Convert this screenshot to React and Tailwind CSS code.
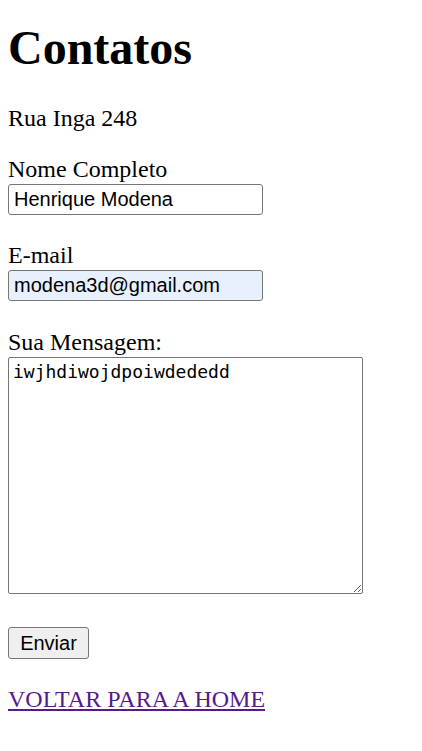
export default function App() {
  return (
    <div className="min-h-screen bg-white p-2 text-black font-['Liberation_Serif',serif] text-[24px]">
      <h1 className="mt-[12px] text-[48px] font-bold leading-[55px]">Contatos</h1>
      <p className="mt-[30px] leading-[27px]">Rua Inga 248</p>

      <form className="flex flex-col items-start" onSubmit={(e) => e.preventDefault()}>
        <label className="mt-[22px] block leading-[30px]">Nome Completo</label>
        <input
          className="h-[31px] w-[255px] rounded-[3px] border border-[#767676] bg-white px-[5px] font-['Liberation_Sans',sans-serif] text-[20px] text-black outline-none"
          defaultValue="Henrique Modena"
        />

        <label className="mt-[25px] block leading-[30px]">E-mail</label>
        <input
          className="h-[31px] w-[255px] rounded-[3px] border border-[#767676] bg-[#e8f0fe] px-[5px] font-['Liberation_Sans',sans-serif] text-[20px] text-black outline-none"
          defaultValue="modena3d@gmail.com"
        />

        <label className="mt-[26px] block leading-[30px]">Sua Mensagem:</label>
        <textarea
          className="h-[237px] w-[355px] rounded-[2px] border border-[#767676] bg-white px-[4px] py-[3px] font-['DejaVu_Sans_Mono',monospace] text-[18px] leading-[21px] text-black outline-none"
          defaultValue="iwjhdiwojdpoiwdededd"
        />

        <button
          type="submit"
          className="mt-[33px] h-[32px] w-[81px] rounded-[3px] border border-[#767676] bg-[#efefef] font-['Liberation_Sans',sans-serif] text-[20px] leading-[23px] text-black"
        >
          Enviar
        </button>
      </form>

      <a href="#" className="mt-[27px] block w-fit leading-[27px] text-[#551a8b] underline">
        VOLTAR PARA A HOME
      </a>
    </div>
  )
}
